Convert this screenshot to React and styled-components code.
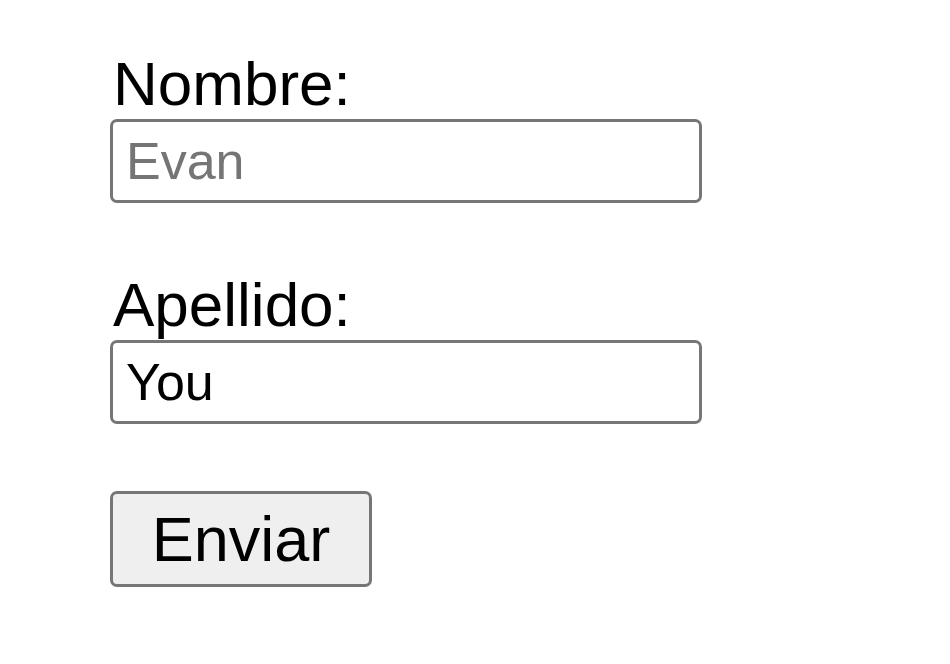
import styled, { createGlobalStyle } from 'styled-components'

const GlobalStyle = createGlobalStyle`
    body {
        margin: 0;
        background: #ffffff;
        font-family: "Liberation Sans", Arial, sans-serif;
    }
`

const Form = styled.form`
    display: flex;
    flex-direction: column;
    align-items: flex-start;
    padding: 49px 0 0 110px;
`

const Field = styled.div`
    display: flex;
    flex-direction: column;
    align-items: flex-start;
    margin-bottom: 67px;
`

const Label = styled.label`
    font-size: 62px;
    line-height: 70px;
    color: #000;
    padding-left: 3px;
`

const Input = styled.input`
    box-sizing: border-box;
    width: 592px;
    height: 84px;
    padding: 0 13px;
    border: 3px solid #767676;
    border-radius: 7px;
    font-family: "Liberation Sans", Arial, sans-serif;
    font-size: 52px;
    color: #000;
    background: #fff;
    outline: none;

    &::placeholder {
        color: #757575;
    }
`

const Button = styled.button`
    box-sizing: border-box;
    width: 262px;
    height: 96px;
    padding: 0;
    border: 3px solid #767676;
    border-radius: 7px;
    background: #efefef;
    font-family: "Liberation Sans", Arial, sans-serif;
    font-size: 63px;
    color: #000;
`

const App = () => {
    return (
        <>
            <GlobalStyle />
            <Form onSubmit={e => e.preventDefault()}>
                <Field>
                    <Label htmlFor="nombre">Nombre:</Label>
                    <Input id="nombre" type="text" placeholder="Evan" />
                </Field>
                <Field>
                    <Label htmlFor="apellido">Apellido:</Label>
                    <Input id="apellido" type="text" defaultValue="You" />
                </Field>
                <Button type="submit">Enviar</Button>
            </Form>
        </>
    );
}

export default App;
